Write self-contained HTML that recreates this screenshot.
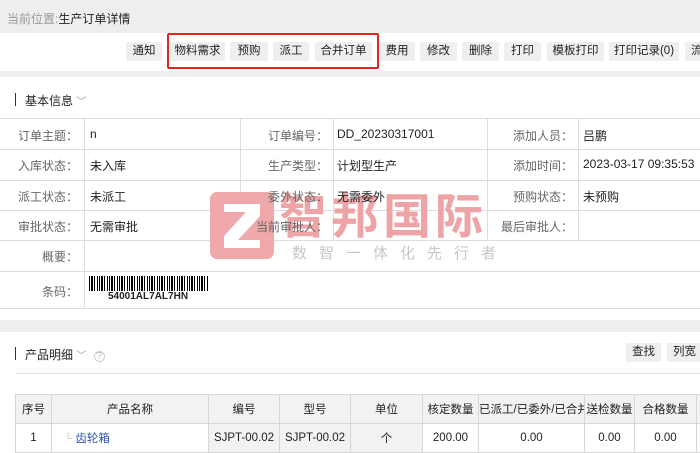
<!DOCTYPE html>
<html><head><meta charset="utf-8"><style>
*{margin:0;padding:0;box-sizing:border-box}
body{width:700px;height:451px;overflow:hidden;background:#fff;font-family:"Liberation Sans","Noto Sans CJK SC",sans-serif;font-size:12px;color:#222;position:relative}
.a{position:absolute}
.btn{position:absolute;top:42px;height:19px;background:#efefef;border-radius:2px;font-size:11.5px;line-height:19px;text-align:center;color:#222}
.l{position:absolute;background:#ddd}
.lab{position:absolute;text-align:right;color:#666;font-size:12px}
.val{position:absolute;font-size:12px;color:#222}
th,td{border:1px solid #d6d6d6;font-size:11.5px;text-align:center;font-weight:normal;padding:0}
</style></head><body>
<div class="a" style="left:0;top:0;width:700px;height:33px;background:#eeeeee"></div>
<div class="a" style="left:7px;top:10px;font-size:12px;color:#999">当前位置:<span style="color:#222">生产订单详情</span></div>
<div class="btn" style="left:126px;width:36px">通知</div>
<div class="btn" style="left:170px;width:55px">物料需求</div>
<div class="btn" style="left:230px;width:38px">预购</div>
<div class="btn" style="left:273px;width:36px">派工</div>
<div class="btn" style="left:315px;width:57px">合并订单</div>
<div class="btn" style="left:379px;width:36px">费用</div>
<div class="btn" style="left:420px;width:37px">修改</div>
<div class="btn" style="left:462px;width:37px">删除</div>
<div class="btn" style="left:504px;width:37px">打印</div>
<div class="btn" style="left:547px;width:57px">模板打印</div>
<div class="btn" style="left:609px;width:70px">打印记录(0)</div>
<div class="btn" style="left:685px;width:30px;text-align:left;padding-left:6px">流</div>
<div class="a" style="left:167px;top:33px;width:212px;height:36px;border:2px solid #e52521;border-radius:2px"></div>
<div class="a" style="left:0;top:71px;width:700px;height:6px;background:#eeeeee"></div>
<div class="a" style="left:15px;top:93px;width:1px;height:13px;background:#333"></div>
<div class="a" style="left:25px;top:92px;font-size:12px">基本信息 <span style="color:#999;font-size:10px">﹀</span></div>
<div class="l" style="left:0;top:118px;width:700px;height:1px"></div>
<div class="l" style="left:0;top:149px;width:700px;height:1px"></div>
<div class="l" style="left:0;top:180px;width:700px;height:1px"></div>
<div class="l" style="left:0;top:210px;width:700px;height:1px"></div>
<div class="l" style="left:0;top:240px;width:700px;height:1px"></div>
<div class="l" style="left:0;top:271px;width:700px;height:1px"></div>
<div class="l" style="left:0;top:308px;width:700px;height:1px"></div>
<div class="l" style="left:84px;top:118px;width:1px;height:190px"></div>
<div class="l" style="left:240px;top:118px;width:1px;height:122px"></div>
<div class="l" style="left:333px;top:118px;width:1px;height:122px"></div>
<div class="l" style="left:487px;top:118px;width:1px;height:122px"></div>
<div class="l" style="left:578px;top:118px;width:1px;height:122px"></div>
<!-- watermark -->
<div class="a" style="left:210px;top:192px;width:64px;height:67px;background:#eea4a7;border-radius:7px;opacity:.95"></div>
<svg class="a" style="left:210px;top:192px" width="64" height="67"><path d="M14 12H50V24L28 48H50V56H14V44L36 20H14Z" fill="#fff"/></svg>
<div class="a" style="left:279px;top:186px;font-size:48px;line-height:52px;color:#eea4a7;font-weight:bold;letter-spacing:4px;font-family:'Noto Sans CJK SC',sans-serif">智邦国际</div>
<div class="a" style="left:292px;top:242px;font-size:15px;color:#c8c8c8;letter-spacing:12px;font-family:'Noto Sans CJK SC',sans-serif">数智一体化先行者</div>
<div class="lab" style="left:0;top:127px;width:78px">订单主题：</div><div class="val" style="left:90px;top:127px">n</div>
<div class="lab" style="left:240px;top:127px;width:88px">订单编号：</div><div class="val" style="left:337px;top:127px">DD_20230317001</div>
<div class="lab" style="left:487px;top:127px;width:86px">添加人员：</div><div class="val" style="left:583px;top:127px">吕鹏</div>
<div class="lab" style="left:0;top:157px;width:78px">入库状态：</div><div class="val" style="left:90px;top:157px">未入库</div>
<div class="lab" style="left:240px;top:157px;width:88px">生产类型：</div><div class="val" style="left:337px;top:157px">计划型生产</div>
<div class="lab" style="left:487px;top:157px;width:86px">添加时间：</div><div class="val" style="left:583px;top:157px">2023-03-17 09:35:53</div>
<div class="lab" style="left:0;top:188px;width:78px">派工状态：</div><div class="val" style="left:90px;top:188px">未派工</div>
<div class="lab" style="left:240px;top:188px;width:88px">委外状态：</div><div class="val" style="left:337px;top:188px">无需委外</div>
<div class="lab" style="left:487px;top:188px;width:86px">预购状态：</div><div class="val" style="left:583px;top:188px">未预购</div>
<div class="lab" style="left:0;top:218px;width:78px">审批状态：</div><div class="val" style="left:90px;top:218px">无需审批</div>
<div class="lab" style="left:240px;top:218px;width:88px">当前审批人：</div>
<div class="lab" style="left:487px;top:218px;width:86px">最后审批人：</div>
<div class="lab" style="left:0;top:248px;width:78px">概要：</div>
<div class="lab" style="left:0;top:283px;width:78px">条码：</div>
<div class="a" style="left:89px;top:276px;width:120px;height:15px;background:repeating-linear-gradient(90deg,#000 0 1px,#fff 1px 2px,#000 2px 4px,#fff 4px 5px,#000 5px 6px,#fff 6px 8px,#000 8px 9px,#fff 9px 10px)"></div>
<div class="a" style="left:108px;top:291px;font-size:10px;font-weight:bold">54001AL7AL7HN</div>
<div class="a" style="left:0;top:320px;width:700px;height:12px;background:#eeeeee"></div>
<div class="a" style="left:15px;top:347px;width:1px;height:13px;background:#333"></div>
<div class="a" style="left:25px;top:346px;font-size:12px">产品明细 <span style="color:#999;font-size:10px">﹀</span> <span style="color:#bbb;font-size:10px;border:1px solid #ccc;border-radius:50%;display:inline-block;width:11px;height:11px;line-height:9px;text-align:center;margin-left:4px">?</span></div>
<div class="a" style="left:626px;top:343px;width:35px;height:19px;background:#efefef;line-height:19px;text-align:center;font-size:11.5px">查找</div>
<div class="a" style="left:667px;top:343px;width:40px;height:19px;background:#efefef;line-height:19px;padding-left:6px;font-size:11.5px">列宽</div>
<div class="l" style="left:15px;top:373px;width:685px;height:1px;background:#e4e4e4"></div>
<table class="a" style="left:15px;top:394px;border-collapse:collapse;table-layout:fixed;width:690px">
<colgroup><col style="width:36px"><col style="width:157px"><col style="width:71px"><col style="width:71px"><col style="width:72px"><col style="width:56px"><col style="width:106px"><col style="width:50px"><col style="width:62px"><col style="width:9px"></colgroup>
<tr style="height:29px;background:#f2f2f2"><th>序号</th><th>产品名称</th><th>编号</th><th>型号</th><th>单位</th><th>核定数量</th><th style="white-space:nowrap;overflow:hidden">已派工/已委外/已合并</th><th>送检数量</th><th>合格数量</th><th></th></tr>
<tr style="height:29px"><td>1</td><td style="text-align:left;padding-left:12px;color:#2d55b5"><span style="color:#ccc">└</span> 齿轮箱</td><td style="background:#f2f2f2">SJPT-00.02</td><td style="background:#f2f2f2">SJPT-00.02</td><td style="background:#f2f2f2">个</td><td>200.00</td><td>0.00</td><td>0.00</td><td>0.00</td><td></td></tr>
</table>
</body></html>
